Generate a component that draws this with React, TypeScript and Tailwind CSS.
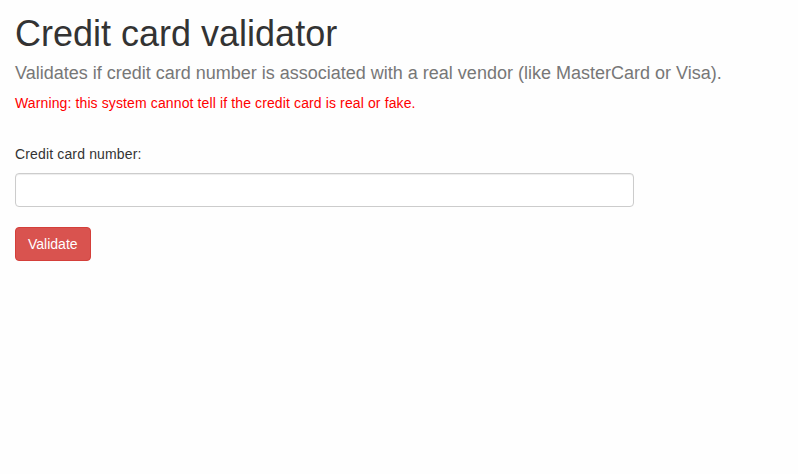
import { useState } from 'react';

export default function App() {
  const [cardNumber, setCardNumber] = useState('');

  return (
    <div className="min-h-screen w-full bg-[#fefefe] font-['Liberation_Sans',Arial,sans-serif] text-[#333]">
      <div className="flex flex-col px-[15px] pt-[14px]">
        <h1 className="text-[36px] leading-[40px] font-normal text-[#333]">
          Credit card validator
        </h1>
        <p className="mt-[9px] text-[18px] leading-[20px] text-[#777]">
          Validates if credit card number is associated with a real vendor (like
          MasterCard or Visa).
        </p>
        <p className="mt-[10px] text-[14px] leading-[20px] tracking-[0.12px] text-[#ff0000]">
          Warning: this system cannot tell if the credit card is real or fake.
        </p>

        <label
          htmlFor="card"
          className="mt-[31px] text-[14px] leading-[20px] tracking-[0.15px] text-[#333]"
        >
          Credit card number:
        </label>
        <input
          id="card"
          type="text"
          value={cardNumber}
          onChange={(e) => setCardNumber(e.target.value)}
          className="mt-[9px] h-[34px] w-[619px] rounded-[4px] border border-[#ccc] bg-white px-3 text-[14px] text-[#555] shadow-[inset_0_1px_1px_rgba(0,0,0,0.075)] outline-none"
        />
        <div className="mt-[20px]">
          <button
            type="button"
            className="h-[34px] rounded-[4px] border border-[#d43f3a] bg-[#d9534f] px-3 text-[14px] leading-[20px] text-white"
          >
            Validate
          </button>
        </div>
      </div>
    </div>
  );
}
